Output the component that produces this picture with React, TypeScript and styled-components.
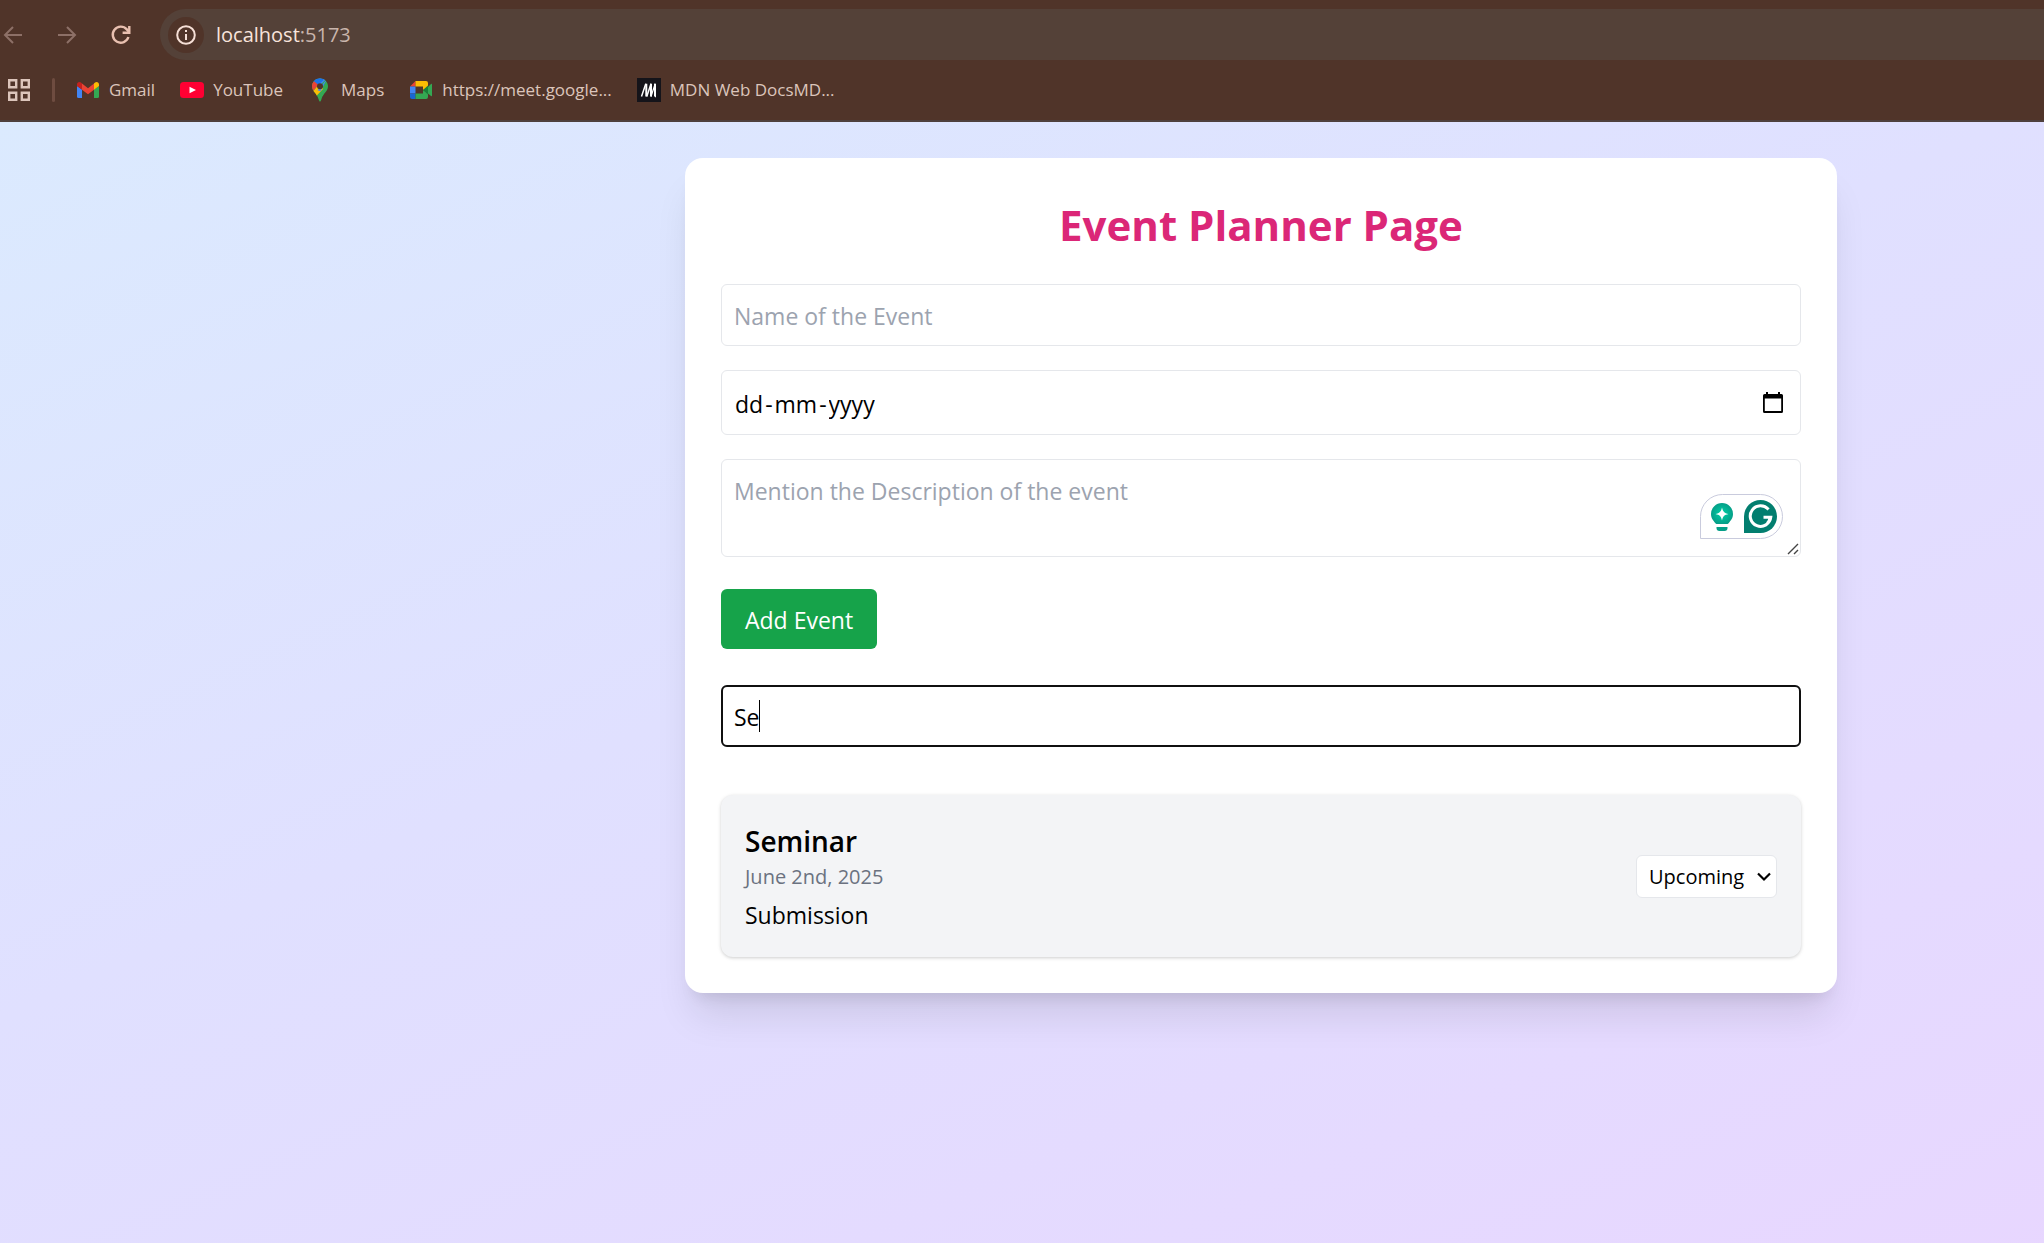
import React, { useState } from "react";
import styled, { createGlobalStyle } from "styled-components";

const GlobalStyle = createGlobalStyle`
  *, *::before, *::after { box-sizing: border-box; }
  html, body, #root { min-height: 100vh; }
  body { margin: 0; font-family: "Open Sans", "Noto Sans", sans-serif; color: #000; }
  #root { display: flex; flex-direction: column; }
  h1, h2, p, ul { margin: 0; padding: 0; }
  input, textarea, select, button { font: inherit; color: inherit; margin: 0; }
  svg { display: block; flex: none; }
`;

const Shell = styled.div`
  flex: 1;
  display: flex;
  flex-direction: column;
  overflow: hidden;
`;

const Chrome = styled.header`
  background: #503429;
  border-bottom: 2px solid #4e403d;
  color: #dcc5bb;
`;

const Toolbar = styled.div`
  display: flex;
  align-items: center;
  padding-top: 9px;
`;

const NavButtons = styled.div`
  display: flex;
  width: 160px;
  padding-left: 1px;
  gap: 30px;
`;

const NavButton = styled.button<{ $dim?: boolean }>`
  display: flex;
  padding: 0;
  border: 0;
  background: none;
  color: ${(p) => (p.$dim ? "#8d7067" : "#e9c0b0")};
`;

const AddressBar = styled.div`
  flex: 1;
  display: flex;
  align-items: center;
  gap: 12px;
  height: 51px;
  padding-left: 8px;
  background: #544138;
  border-radius: 26px 0 0 26px;
`;

const InfoButton = styled.button`
  display: grid;
  place-items: center;
  width: 36px;
  height: 36px;
  padding: 0;
  border: 0;
  border-radius: 50%;
  background: #503429;
  color: #f6dfd6;
`;

const Address = styled.span`
  font-size: 20px;
  line-height: 28px;
  color: #c9b5ac;
  b { font-weight: 400; color: #f8e4dc; }
`;

const Bookmarks = styled.nav`
  display: flex;
  align-items: center;
  height: 60px;
  padding-left: 8px;
`;

const Separator = styled.span`
  width: 3px;
  height: 24px;
  margin: 0 21px 0 22px;
  border-radius: 2px;
  background: #6e4c40;
`;

const BookmarkList = styled.div`
  display: flex;
  gap: 25px;
`;

const Bookmark = styled.a`
  display: flex;
  align-items: center;
  gap: 9px;
  font-size: 17px;
  line-height: 24px;
  color: inherit;
  text-decoration: none;
`;

const Page = styled.main`
  flex: 1;
  display: grid;
  grid-template-columns: 685fr minmax(0, 1152px) 207fr;
  align-items: start;
  padding: 36px 0;
  background: linear-gradient(to bottom right, #dbeafe, #e0e0ff 40%, #e9d5ff) 0 0 / 123% 100% no-repeat;
`;

const Card = styled.section`
  grid-column: 2;
  padding: 36px;
  border-radius: 18px;
  background: #fff;
  box-shadow: 0 30px 38px -8px rgba(0, 0, 0, 0.1), 0 12px 15px -9px rgba(0, 0, 0, 0.1);
`;

const Title = styled.h1`
  padding-top: 4px;
  margin-bottom: 32px;
  font-size: 42px;
  line-height: 54px;
  font-weight: 700;
  text-align: center;
  color: #db2777;
`;

const Form = styled.form`
  display: flex;
  flex-direction: column;
  align-items: flex-start;
  gap: 24px;
`;

const Field = styled.div`
  position: relative;
  width: 100%;
`;

const TextInput = styled.input<{ $active?: boolean }>`
  display: block;
  width: 100%;
  height: 62px;
  padding: 13px 12px 11px;
  border: 1px solid #e5e7eb;
  border-radius: 6px;
  background: #fff;
  font-size: 23px;
  line-height: 36px;
  outline: ${(p) => (p.$active ? "2px solid #101010" : "none")};
  outline-offset: -2px;
  caret-color: transparent;
  &::placeholder { color: #9ca3af; opacity: 1; }
`;

const DateBox = styled.div`
  display: flex;
  align-items: center;
  gap: 2px;
  height: 65px;
  padding: 14px 16px 12px 13px;
  border: 1px solid #e5e7eb;
  border-radius: 6px;
  background: #fff;
  font-size: 23px;
  line-height: 36px;
`;

const DatePart = styled.input`
  field-sizing: content;
  padding: 0;
  border: 0;
  outline: none;
  background: none;
  &::placeholder { color: #000; opacity: 1; }
`;

const CalendarButton = styled.button`
  display: flex;
  margin-left: auto;
  padding: 0 0 4px;
  border: 0;
  background: none;
`;

const TextArea = styled.textarea`
  display: block;
  width: 100%;
  height: 98px;
  padding: 13px 12px 11px;
  border: 1px solid #e5e7eb;
  border-radius: 6px;
  background: #fff;
  font-size: 23px;
  line-height: 36px;
  resize: none;
  &::placeholder { color: #9ca3af; opacity: 1; }
`;

const ResizeGrip = styled.svg`
  position: absolute;
  right: 2px;
  bottom: 2px;
`;

const Assistant = styled.div`
  position: absolute;
  top: 35px;
  right: 18px;
  display: flex;
  align-items: center;
  gap: 10px;
  width: 83px;
  height: 45px;
  padding-left: 9px;
  border: 1px solid #c9cbdd;
  border-radius: 23px 23px 23px 0;
  background: #fff;
`;

const AddButton = styled.button`
  margin-top: 8px;
  padding: 13px 24px 11px;
  border: 0;
  border-radius: 6px;
  background: #16a34a;
  color: #fff;
  font-size: 23px;
  line-height: 36px;
`;

const SearchField = styled(Field)`
  margin: 36px 0 48px;
`;

const Caret = styled.span`
  position: absolute;
  top: 15px;
  left: 38px;
  width: 1px;
  height: 32px;
  background: #000;
`;

const EventList = styled.ul`
  display: flex;
  flex-direction: column;
  gap: 24px;
  list-style: none;
`;

const EventItem = styled.li`
  display: flex;
  justify-content: space-between;
  align-items: center;
  padding: 24px;
  border-radius: 12px;
  background: #f3f4f6;
  box-shadow: 0 1px 4px rgba(0, 0, 0, 0.1), 0 1px 3px rgba(0, 0, 0, 0.1);
`;

const EventDetails = styled.div`
  padding-top: 1px;
`;

const EventName = styled.h2`
  font-size: 28px;
  line-height: 42px;
  font-weight: 600;
`;

const EventDate = styled.p`
  font-size: 20px;
  line-height: 30px;
  color: #6b7280;
`;

const EventText = styled.p`
  margin-top: 5px;
  font-size: 23px;
  line-height: 36px;
`;

const SelectWrap = styled.div`
  position: relative;
`;

const StatusSelect = styled.select`
  display: block;
  appearance: none;
  width: 141px;
  height: 43px;
  padding: 2px 12px 0;
  border: 1px solid #e5e7eb;
  border-radius: 6px;
  background: #fff;
  font-size: 20px;
  line-height: 30px;
`;

const Chevron = styled.svg`
  position: absolute;
  top: 17px;
  right: 6px;
  pointer-events: none;
`;

const ArrowIcon = ({ flip }: { flip?: boolean }) => (
  <svg width="24" height="24" viewBox="0 0 24 24" fill="none" stroke="currentColor" strokeWidth="2">
    <path d={flip ? "M3 12h17M12 4l8 8-8 8" : "M21 12H4M12 4l-8 8 8 8"} />
  </svg>
);

const ReloadIcon = () => (
  <svg width="24" height="24" viewBox="0 0 24 24" fill="none" stroke="currentColor" strokeWidth="2.4">
    <path d="M19.4 14a8 8 0 1 1-1.6-7.6L20 9" />
    <path d="M20.3 3v6.700H13.600" />
  </svg>
);

const InfoIcon = () => (
  <svg width="20" height="20" viewBox="0 0 20 20" fill="none" stroke="currentColor" strokeWidth="2">
    <circle cx="10" cy="10" r="8.8" />
    <path d="M10 9v6M10 5v2" />
  </svg>
);

const AppsIcon = () => (
  <svg width="22" height="22" viewBox="0 0 22 22" fill="none" stroke="#dcc5bb" strokeWidth="2.4">
    <path d="M1.200 1.200h7v7h-7zM13.800 1.200h7v7h-7zM1.200 13.800h7v7h-7zM13.800 13.800h7v7h-7z" />
  </svg>
);

const GmailIcon = () => (
  <svg width="24" height="24" viewBox="0 0 24 24">
    <path fill="#4285f4" d="M1 8v10.500A1.500 1.500 0 0 0 2.500 20H6v-8.500z" />
    <path fill="#34a853" d="M18 11.500V20h3.500a1.500 1.500 0 0 0 1.500-1.500V8z" />
    <path fill="#ea4335" d="M6 5.500l6 4.700 6-4.700v6.200l-6 4.600-6-4.600z" />
    <path fill="#c5221f" d="M1 6.500C1 4 3.500 3.200 5 4.600l1 .9v6.200L1 8z" />
    <path fill="#fbbc04" d="M23 6.500c0-2.500-2.500-3.300-4-1.900l-1 .9v6.200L23 8z" />
  </svg>
);

const YouTubeIcon = () => (
  <svg width="24" height="24" viewBox="0 0 24 24">
    <rect y="4" width="24" height="16" rx="3.5" fill="#ff0033" />
    <path fill="#fff" d="M9.500 8.800v6.400l6.500-3.200z" />
  </svg>
);

const MapsIcon = () => (
  <svg width="24" height="24" viewBox="0 0 24 24">
    <clipPath id="pin">
      <path d="M12 .5c4.600 0 8 3.500 8 7.800 0 5.200-4.600 6.600-6.500 12.700-.6 2-1 2.500-1.500 2.500s-.9-.5-1.500-2.500C8.600 14.900 4 13.500 4 8.300 4 4 7.400.5 12 .5z" />
    </clipPath>
    <g clipPath="url(#pin)">
      <path fill="#34a853" d="M0 0h24v24H0z" />
      <path fill="#fbbc04" d="M4 14.600L12 5l3 6-8.500 9z" />
      <path fill="#4285f4" d="M10 9.500L19 0l-2-4H9l-3 9z" />
      <path fill="#4285f4" d="M19 1l-9.500 11.200 3 1z" />
      <path fill="#1a73e8" d="M6 0h7l3 1.500L9.500 7.500 4 3z" />
      <path fill="#ea4335" d="M6 3.200l4.300 3.600L4.600 13.500 0 8z" />
    </g>
    <circle cx="12" cy="8.3" r="3" fill="#503429" />
  </svg>
);

const MeetIcon = () => (
  <svg width="24" height="24" viewBox="0 0 24 24">
    <path fill="#ea4335" d="M1 8.500L6.500 3v5.500z" />
    <path fill="#4285f4" d="M1 8.500h5.500v7H1z" />
    <path fill="#1967d2" d="M1 15.500h5.500V21H3a2 2 0 0 1-2-2z" />
    <path fill="#fbbc04" d="M6.500 3H17a2 2 0 0 1 2 2v4l-5 3V8.500H6.500z" />
    <path fill="#34a853" d="M6.500 15.500H14V12l5 3.500V19a2 2 0 0 1-2 2H6.500zM19 9l3-3c.5-.5 1-.2 1 .4v11.200c0 .6-.5.900-1 .4l-3-2.500z" />
    <path fill="#188038" d="M14 12l5-4.500v9z" />
  </svg>
);

const MdnIcon = () => (
  <svg width="24" height="24" viewBox="0 0 24 24">
    <path fill="#15141a" d="M0 0h24v24H0z" />
    <path fill="none" stroke="#fff" strokeWidth="1.5" d="M4.500 18.500L8.800 5.800M14 5.800L9.800 18.500M19 18.500h-1" />
    <path fill="none" stroke="#fff" strokeWidth="2" d="M9.300 5.800v12.700M14 5.800v12.700M18 5.800v12.700" />
    <path fill="none" stroke="#fff" strokeWidth="1.2" d="M18.200 5.800L14 18.500" />
  </svg>
);

const CalendarIcon = () => (
  <svg width="22" height="24" viewBox="0 0 22 24">
    <path fillRule="evenodd" d="M4 2h2v2h10V2h2v2h1.500A1.500 1.500 0 0 1 21 5.500v16a1.500 1.500 0 0 1-1.500 1.500h-17A1.500 1.500 0 0 1 1 21.500v-16A1.500 1.500 0 0 1 2.500 4H4zM2.800 8.500V21h16.400V8.500z" />
  </svg>
);

const BulbIcon = () => (
  <svg width="24" height="30" viewBox="0 0 24 30">
    <defs>
      <radialGradient id="bulb">
        <stop offset="0" stopColor="#00d1a7" />
        <stop offset="1" stopColor="#059f88" />
      </radialGradient>
    </defs>
    <path fill="url(#bulb)" d="M12 1a11 11 0 0 1 11 11c0 4.500-2.500 6.500-4 8.700-.4.600-1 1.300-2 1.300H7c-1 0-1.600-.7-2-1.300C3.500 18.500 1 16.500 1 12A11 11 0 0 1 12 1z" />
    <path fill="#059f88" d="M6.500 25h11v1a3 3 0 0 1-3 3h-5a3 3 0 0 1-3-3z" />
    <path fill="#fff" d="M12 5.500c1 4.300 2.200 5.500 6.500 6.500-4.300 1-5.500 2.200-6.500 6.500-1-4.300-2.200-5.500-6.500-6.500 4.300-1 5.500-2.200 6.500-6.500z" />
  </svg>
);

const GrammarIcon = () => (
  <svg width="33" height="33" viewBox="0 0 33 33">
    <path fill="#027e6f" d="M0 16.500a16.500 16.500 0 1 1 16.500 16.500H0z" />
    <path fill="none" stroke="#fff" strokeWidth="3" d="M24.500 9.500A10.300 10.300 0 1 0 26.800 17.200H19.500M26.300 16.500c-.3 3-1.300 5-3 6.800" />
  </svg>
);

const bookmarks = [
  { label: "Gmail", href: "#gmail", Icon: GmailIcon },
  { label: "YouTube", href: "#youtube", Icon: YouTubeIcon },
  { label: "Maps", href: "#maps", Icon: MapsIcon },
  { label: "https://meet.google...", href: "#meet", Icon: MeetIcon },
  { label: "MDN Web DocsMD...", href: "#mdn", Icon: MdnIcon },
];

const events = [{ name: "Seminar", date: "June 2nd, 2025", text: "Submission" }];

export default function App() {
  const [query, setQuery] = useState("Se");
  const shown = events.filter((e) => e.name.toLowerCase().includes(query.toLowerCase()));

  return (
    <Shell>
      <GlobalStyle />
      <Chrome>
        <Toolbar>
          <NavButtons>
            <NavButton $dim aria-label="Back"><ArrowIcon /></NavButton>
            <NavButton $dim aria-label="Forward"><ArrowIcon flip /></NavButton>
            <NavButton aria-label="Reload"><ReloadIcon /></NavButton>
          </NavButtons>
          <AddressBar>
            <InfoButton aria-label="Site information"><InfoIcon /></InfoButton>
            <Address><b>localhost</b>:5173</Address>
          </AddressBar>
        </Toolbar>
        <Bookmarks aria-label="Bookmarks">
          <AppsIcon />
          <Separator />
          <BookmarkList>
            {bookmarks.map(({ label, href, Icon }) => (
              <Bookmark key={label} href={href}><Icon />{label}</Bookmark>
            ))}
          </BookmarkList>
        </Bookmarks>
      </Chrome>
      <Page>
        <Card>
          <Title>Event Planner Page</Title>
          <Form onSubmit={(e) => e.preventDefault()}>
            <Field><TextInput aria-label="Name of the Event" placeholder="Name of the Event" /></Field>
            <Field>
              <DateBox role="group" aria-label="Event date">
                <DatePart aria-label="Day" placeholder="dd" maxLength={2} />
                <span>-</span>
                <DatePart aria-label="Month" placeholder="mm" maxLength={2} />
                <span>-</span>
                <DatePart aria-label="Year" placeholder="yyyy" maxLength={4} />
                <CalendarButton type="button" aria-label="Open calendar"><CalendarIcon /></CalendarButton>
              </DateBox>
            </Field>
            <Field>
              <TextArea aria-label="Description" placeholder="Mention the Description of the event" />
              <Assistant><BulbIcon /><GrammarIcon /></Assistant>
              <ResizeGrip width="12" height="12" viewBox="0 0 12 12" fill="none" stroke="#444" strokeWidth="1.4">
                <path d="M1 11L11 1M7 11l4-4" />
              </ResizeGrip>
            </Field>
            <AddButton type="submit">Add Event</AddButton>
          </Form>
          <SearchField>
            <TextInput $active aria-label="Search events" value={query} onChange={(e) => setQuery(e.target.value)} />
            <Caret />
          </SearchField>
          <EventList>
            {shown.map((e) => (
              <EventItem key={e.name}>
                <EventDetails>
                  <EventName>{e.name}</EventName>
                  <EventDate>{e.date}</EventDate>
                  <EventText>{e.text}</EventText>
                </EventDetails>
                <SelectWrap>
                  <StatusSelect aria-label="Status" defaultValue="Upcoming">
                    <option>Upcoming</option>
                    <option>Completed</option>
                  </StatusSelect>
                  <Chevron width="14" height="10" viewBox="0 0 14 10" fill="none" stroke="#000" strokeWidth="2.2">
                    <path d="M1 1.500l6 6 6-6" />
                  </Chevron>
                </SelectWrap>
              </EventItem>
            ))}
          </EventList>
        </Card>
      </Page>
    </Shell>
  );
}
